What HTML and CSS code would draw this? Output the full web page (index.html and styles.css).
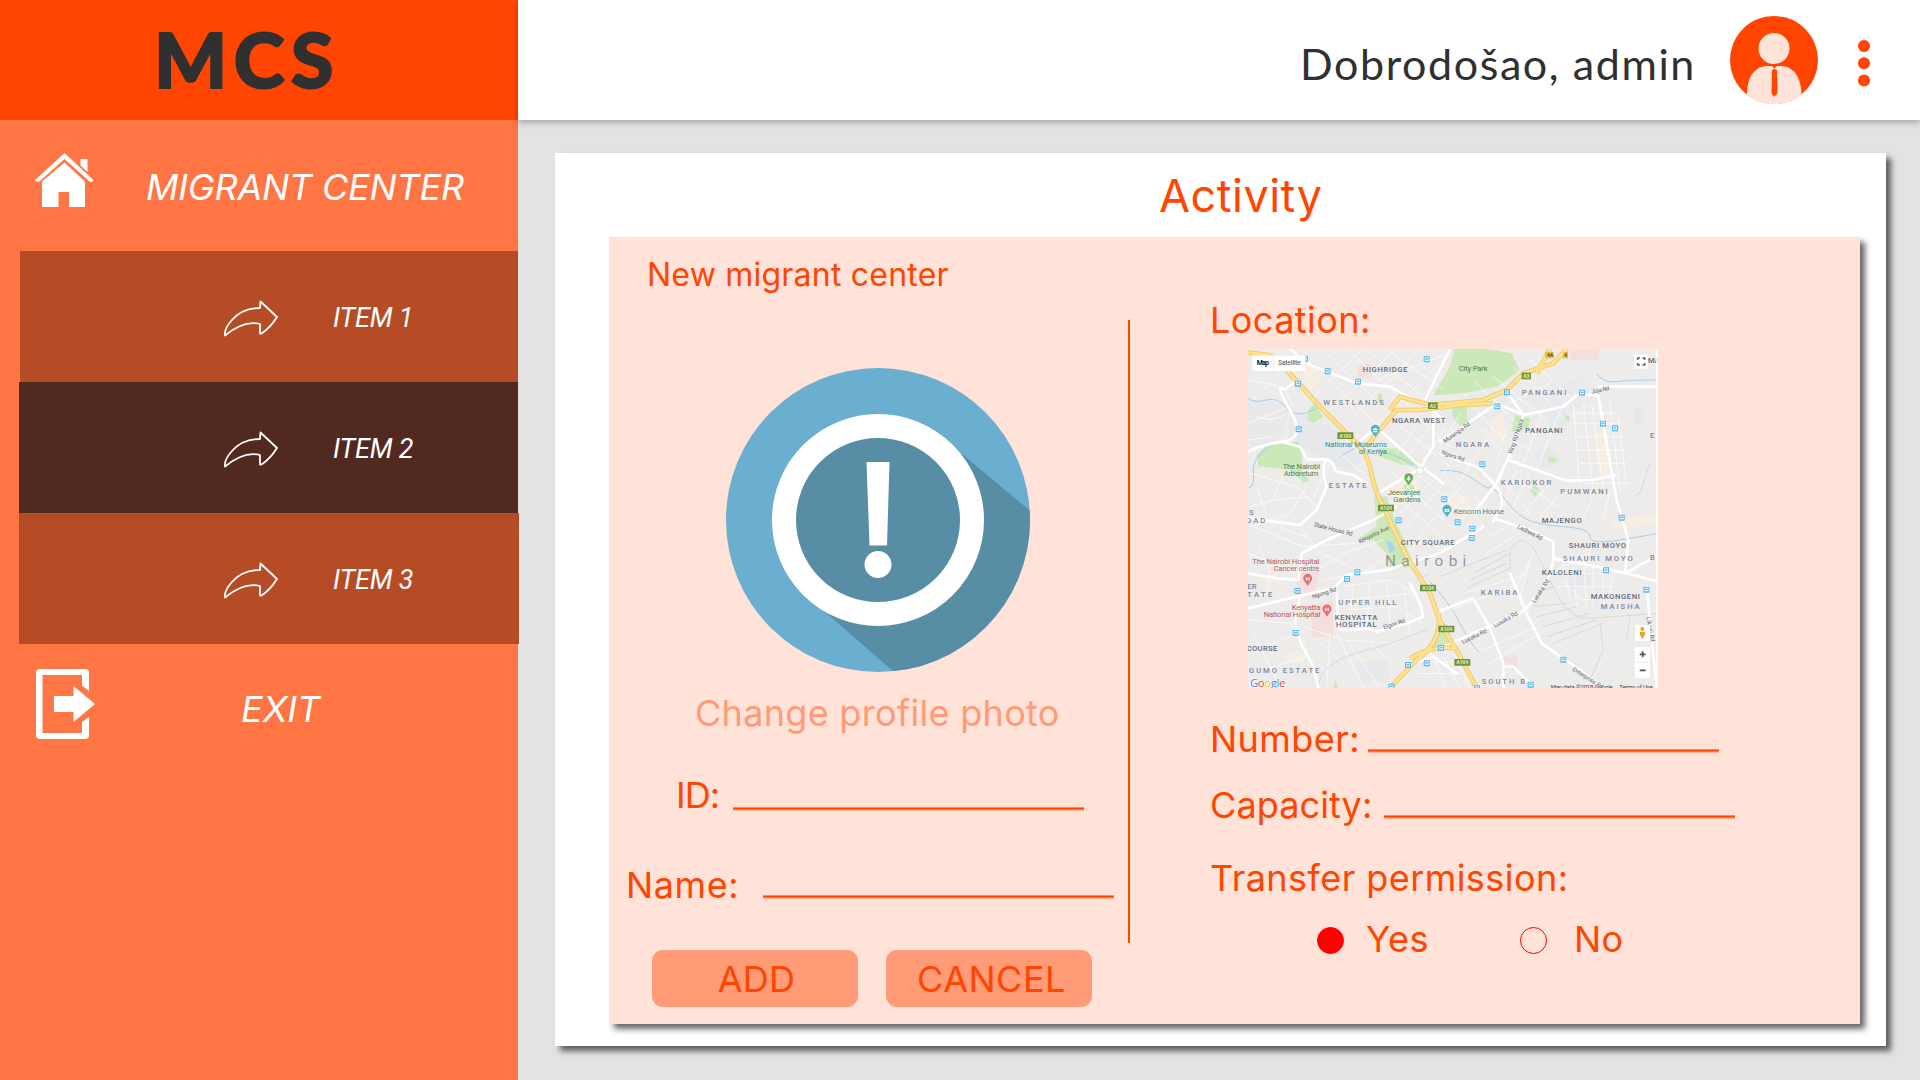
FILE: index.html
```html
<!DOCTYPE html>
<html lang="en">
<head>
<meta charset="utf-8">
<title>MCS</title>
<link rel="stylesheet" href="styles.css">
</head>
<body>
<div class="app">
  <aside class="sidebar">
    <div class="brand"><span class="brand-text">MCS</span></div>
    <a class="nav-home">
      <svg class="home-icon" width="60" height="56" viewBox="0 0 60 56" fill="#fff"><path d="M46.500 6H53.500V19L46.500 12.500Z"/><path d="M30.500 0 60 27.500Q58 29.500 55.500 28.500L30.500 6 5.500 28.500Q2.500 29.500 .5 27.500Z"/><path d="M30.500 9.500 51 28.500V54H35V40Q35 39 34 39H25.500Q24.500 39 24.500 40V54H8V28.500Z"/></svg>
      <span class="t-home">MIGRANT CENTER</span>
    </a>
    <nav class="items">
      <a class="item"><svg class="arrow" width="58" height="40" viewBox="0 0 58 40"><path d="M38.500 2.500 55 18Q48 29 39.500 34.500L38 34.500V25Q22 21 3 36.500 2 30 9.500 21.500 20 9 38 9Z"/></svg><span class="t-item">ITEM 1</span></a>
      <a class="item active"><svg class="arrow" width="58" height="40" viewBox="0 0 58 40"><path d="M38.500 2.500 55 18Q48 29 39.500 34.500L38 34.500V25Q22 21 3 36.500 2 30 9.500 21.500 20 9 38 9Z"/></svg><span class="t-item">ITEM 2</span></a>
      <a class="item last"><svg class="arrow" width="58" height="40" viewBox="0 0 58 40"><path d="M38.500 2.500 55 18Q48 29 39.500 34.500L38 34.500V25Q22 21 3 36.500 2 30 9.500 21.500 20 9 38 9Z"/></svg><span class="t-item">ITEM 3</span></a>
    </nav>
    <a class="nav-exit">
      <svg width="60" height="70" viewBox="0 0 60 70" fill="#fff"><path d="M4 0H49Q53 0 53 4V22L46 16.500V6H6.500V64H46V53L53 48V66Q53 70 49 70H4Q0 70 0 66V4Q0 0 4 0Z"/><path d="M18 27H37.500V17L59 35 37.500 53V43H18Z"/></svg>
      <span class="t-exit">EXIT</span>
    </a>
  </aside>
  <div class="content">
    <header class="topbar">
      <span class="welcome">Dobrodošao, admin</span>
      <svg class="avatar" width="88" height="88" viewBox="0 0 88 88"><circle cx="44" cy="44" r="44" fill="#ff4500"/><g fill="#ffe2d8"><circle cx="44" cy="32.500" r="15.500"/><path d="M17 79C17 60 25 50 38 50H50C63 50 71 60 71.500 78.500A44 44 0 0 1 17 79Z"/></g><path fill="#ff4500" d="M41.500 49.500H47L44.500 52.500ZM42 54 44.300 53 47 54 47.500 77 44 81 41.500 77Z"/></svg>
      <svg class="dots" width="12" height="48" viewBox="0 0 12 48" fill="#ff4500"><circle cx="6" cy="7" r="6"/><circle cx="6" cy="24.200" r="6"/><circle cx="6" cy="41.500" r="6"/></svg>
    </header>
    <main class="panel">
      <h1 class="heading">Activity</h1>
      <section class="card">
        <div class="left">
          <h2 class="subtitle">New migrant center</h2>
          <svg class="photo" width="304" height="304" viewBox="0 0 304 304"><clipPath id="disc"><circle cx="152" cy="152" r="152"/></clipPath><circle cx="152" cy="152" r="152" fill="#6aafcf"/><path clip-path="url(#disc)" fill="#578da5" d="M236 86 320 156V304H183L97 242Z"/><path clip-path="url(#disc)" fill="#578da5" d="M97 242 167 303H230V200Z"/><circle cx="152" cy="152" r="94" fill="#578da5" stroke="#fff" stroke-width="24"/><path fill="#fff" d="M140.500 94H163.500L161 177.500H143.500Z"/><circle cx="152" cy="196.500" r="13.500" fill="#fff"/></svg>
          <a class="change">Change profile photo</a>
          <div class="field f-id"><label class="l-id">ID:</label><span class="line"></span></div>
          <div class="field f-name"><label class="l-name">Name:</label><span class="line"></span></div>
          <div class="buttons"><button class="btn"><span class="t-add">ADD</span></button><button class="btn"><span class="t-cancel">CANCEL</span></button></div>
        </div>
        <div class="divider"></div>
        <div class="right">
          <label class="l-location">Location:</label>
          <svg class="map" width="410" height="339" viewBox="54 27 1230 1017">
            <defs>
              <g id="bus"><rect x="-9" y="-9" width="18" height="18" rx="2" fill="#53b7f2"/><path fill="#e9f7ff" d="M-6-6H6V5H-6Z"/><path fill="#53b7f2" d="M-4-3H4V1H-4Z"/></g>
              <g id="shield"><rect x="-24" y="-10" width="48" height="20" rx="2" fill="#6f943d"/><text x="-18" y="6" class="shield-text" textLength="36">A104</text></g>
              <g id="pin"><path d="M0 20-9 7A13.500 13.500 0 1 1 9 7Z"/></g>
            </defs>
            <rect x="54" y="27" width="1230" height="1017" fill="#edeceb"/>
            <g fill="#e6e8ec"><path d="M180 200 300 260 400 330 370 400 230 330 180 300Z"/><path d="M54 180 180 190 160 290 54 330Z" opacity=".6"/><path d="M630 190 780 150 900 170 1060 110 1090 190 900 250 630 260Z" opacity=".5"/><path d="M960 190H1010V270H960ZM1210 205H1240V255H1210ZM910 330 960 320 1000 370 930 385ZM1010 710 1090 690 1080 740 1020 750ZM380 970 470 960 480 1020 400 1030Z"/></g>
            <g fill="#f6eee2"><path d="M210 90 260 75 275 130 235 150ZM640 980 670 960 700 990ZM780 240 820 215 825 300 785 300ZM1090 280 1130 270 1145 400 1110 410ZM480 440 560 410 570 470 500 500ZM650 460 720 470 710 540 660 520ZM105 705 140 700 145 725 105 730ZM165 945 210 935 225 965 175 970ZM1140 540 1284 520V550L1150 570Z"/></g>
            <g fill="#f3dfde"><path d="M200 700 270 690 250 770 200 765ZM245 795 310 780V890H245ZM1020 30 1110 27 1100 60 1020 60ZM810 950H860V985H815ZM378 80 420 70 425 110 385 125Z"/></g>
            <g fill="#cbe8b8"><path d="M660 80 610 165 630 165 700 160 800 140 868 92 845 40 770 27H672Z"/><path d="M80 345 110 315 205 305 217 350 215 400 240 420 222 430 180 390 85 378Z"/><path d="M235 210 255 190 280 230 250 250 232 238Z"/><path d="M440 325 500 325 560 360 562 382 510 372 445 348Z"/><path d="M432 470H470L495 540 555 680 480 685 470 640 430 600 380 600 440 560Z"/><path d="M668 195H710L712 245 690 258 668 230Z"/><path d="M855 225 900 235 895 262 860 275 845 275Z"/><path d="M520 435 538 425 555 445 525 455ZM1003 225 1020 230 1017 245 1003 240ZM900 450 915 432 930 455 915 470ZM955 350 980 355 975 368 955 365ZM630 830 660 870 660 925H600L622 880ZM605 790H622L615 815ZM315 1020 325 1044 312 1044ZM443 160H456V190H443Z"/></g>
            <g fill="none" stroke="#a4cdef" stroke-width="3"><path d="M54 175Q75 190 110 180T170 205 260 205M54 445Q75 440 70 400T105 330 165 310M440 330Q490 340 550 375M330 350 400 310"/><path d="M630 392Q690 385 735 420T780 440L820 470Q850 515 885 535T1000 560 1080 590 1170 600 1284 580"/><path d="M1100 100Q1120 130 1160 125T1284 120M600 725Q660 790 690 850T745 935"/></g>
            <path fill="#a7d2f2" d="M470 605 485 605 495 630 480 638Z"/>
            <g fill="none" stroke="#fff" stroke-width="2.500" opacity=".85">
              <path d="M230 60 450 260M290 40 500 240M350 27 540 200M410 27 600 190M470 27 640 150M250 170 400 27M300 210 500 27M350 250 570 27M400 290 640 60M440 120 660 40M54 250 180 200M54 120 160 140 190 200M70 180 150 100M80 230Q130 250 170 220M54 300 130 290M60 400 200 440 260 500M80 440 110 520M160 400 130 480 60 500M230 440 180 520 60 560M130 480 240 470M300 370 250 470M330 340 420 420M330 280 430 380"/>
              <path d="M500 250 660 380M540 210 660 320M480 390 660 560M510 360 680 500M470 450 650 600M560 260 500 340M620 230 540 340M650 260 580 360M580 400 480 490M610 420 510 520M650 420 530 560M690 440 560 600M640 400 760 560M660 390 780 520"/>
              <path d="M700 160 790 270 900 330M730 120 900 290M790 110 950 240M850 80 1010 240M900 60 1030 180M740 250 840 360M770 170 900 110M800 210 960 130M690 220 630 320M720 290 640 400M770 300 690 420M830 260 800 370M870 250 840 370M940 210 880 370M1000 190 920 390M1030 190 1050 450M1060 190 1090 450M1085 190 1120 450M1140 190 1170 450M1165 230 1190 450M1030 220H1160M1030 250H1165M1040 290H1180M1045 330H1190M1050 370H1190M1060 430H1200M830 390 980 500M800 400 900 520M860 390 820 500M900 400 850 500M960 430 880 520M1000 450 920 540M1100 440 1060 540M1140 450 1120 540"/>
              <path d="M70 560 220 620 380 610M140 530 160 570 230 590M54 640 200 700M90 620 120 700 110 770M210 560 270 640 360 680M260 690 340 640 460 600M280 720 400 700 480 640M330 740 480 720 560 760M340 780 560 760M350 810 500 800 580 850M370 740 360 860M420 720 410 870M470 720 480 860M520 740 540 880M54 840 180 850 230 920M80 930 180 890M100 990 230 950M70 880 150 1040M220 860 340 900 500 910M260 900 350 980M300 880 290 1040M320 880 400 1044M350 900 450 1044M400 890 500 980"/>
              <path d="M700 760 900 700M660 810 850 740M720 880 880 820M760 930 920 860M780 970 930 880M670 940 720 1044M640 950 690 1044M600 930 650 1044M840 700 900 820M900 660 870 770M590 970 700 960M560 1000H700M910 640 840 780M980 690 1080 640 1140 700M990 720 1060 780 1180 760M1000 660 1020 780M1030 670 1040 800M1060 650 1070 800M1090 660 1090 800M1120 680 1120 790M1150 690 1140 780M980 740H1150M980 700H1130M830 560 760 600M850 590 770 640"/>
            </g>
            <g fill="none" stroke="#d8d9dc" stroke-width="3"><path d="M710 745 850 680M730 700 840 640M720 720 830 670M630 710 830 630M840 690V630Q880 570 920 640L990 780Q1030 840 1080 835L1284 820M920 760 970 740M910 800 1010 790M920 830 1040 800M940 860 1080 820M950 890 1100 840M970 910 1120 850M1110 850 1120 930 1080 1020M1200 830 1190 900M1260 370 1230 460 1210 470M264 1044Q270 970 380 940T590 870M560 720 600 700"/></g>
            <g fill="none" stroke="#fff" stroke-width="8" stroke-linejoin="round" stroke-linecap="round">
              <path d="M54 335Q90 315 160 305T180 210 165 150L200 120M180 27 240 75 380 130 480 140 570 190 610 195M160 307 210 320 230 358 290 358Q310 365 318 395L370 405 410 430M290 360Q270 380 290 440L260 510 210 555 54 535M370 320 440 262 560 370 640 430"/>
              <path d="M660 27 580 190 640 240M610 200V320L570 385 440 462M630 303 700 260 800 190 880 225 1000 200 1040 165H1100L1110 140H1284M830 155 880 225 850 320 800 430 730 520M630 340 750 385 795 435Q820 460 815 500L790 545M835 360 1010 422 1090 420 1155 405M1105 165 1135 340 1160 480 1195 600 1185 700"/>
              <path d="M54 700 140 715 205 720 215 640 290 600 430 540 500 500M54 805 200 770 310 745 350 705 470 690 630 640 760 560M210 770 195 850 210 905 250 980 265 1044M320 750 325 840 330 870 370 870 410 865 440 875 530 850 580 830 570 790 540 730"/>
              <path d="M790 535 900 570 970 605V660L950 730 885 810 800 850 640 920M970 655 1100 680 1190 700 1284 725M1185 700 1284 645M1250 740 1260 850 1280 1044M840 700 885 810 935 910 1050 990 1120 1044M630 812 730 775 780 865 820 970V1044M820 980 850 980 900 1030M550 970 610 950 680 1000"/>
            </g>
            <g fill="none" stroke="#efc766" stroke-width="14" stroke-linejoin="round"><path d="M54 38 120 45 160 80 270 200 380 310Q410 340 420 380 430 450 465 510L530 650 600 760 625 830Q640 870 680 930L740 1044M625 820Q640 900 560 960L480 1044M540 955Q610 915 675 925M410 320 440 280 500 210H570L690 195 790 190M480 210 510 170 600 195 760 180 830 150 880 100 970 70 1010 27M920 100 960 27"/></g>
            <g fill="none" stroke="#ffe28d" stroke-width="9" stroke-linejoin="round"><path d="M54 38 120 45 160 80 270 200 380 310Q410 340 420 380 430 450 465 510L530 650 600 760 625 830Q640 870 680 930L740 1044M625 820Q640 900 560 960L480 1044M540 955Q610 915 675 925M410 320 440 280 500 210H570L690 195 790 190M480 210 510 170 600 195 760 180 830 150 880 100 970 70 1010 27M920 100 960 27"/></g>
            <g fill="#fff" stroke="#cbe8b8" stroke-width="3"><circle cx="571" cy="392" r="11"/></g>
            <use href="#bus" x="225" y="57"/><use href="#bus" x="293" y="94"/><use href="#bus" x="204" y="131"/><use href="#bus" x="384" y="125"/><use href="#bus" x="590" y="58"/><use href="#bus" x="206" y="268"/><use href="#bus" x="643" y="478"/><use href="#bus" x="506" y="541"/><use href="#bus" x="831" y="157"/><use href="#bus" x="802" y="199"/><use href="#bus" x="757" y="373"/><use href="#bus" x="1056" y="158"/><use href="#bus" x="1119" y="251"/><use href="#bus" x="1155" y="265"/><use href="#bus" x="1175" y="533"/><use href="#bus" x="683" y="547"/><use href="#bus" x="727" y="566"/><use href="#bus" x="725" y="594"/><use href="#bus" x="382" y="697"/><use href="#bus" x="351" y="717"/><use href="#bus" x="202" y="753"/><use href="#bus" x="197" y="879"/><use href="#bus" x="534" y="975"/><use href="#bus" x="590" y="970"/><use href="#bus" x="633" y="924"/><use href="#bus" x="484" y="1040"/><use href="#bus" x="741" y="1045"/><use href="#bus" x="902" y="1034"/><use href="#bus" x="1000" y="959"/><use href="#bus" x="1128" y="691"/><use href="#bus" x="1249" y="749"/>
            <use href="#shield" x="346" y="287"/><use href="#shield" x="468" y="504"/><use href="#shield" x="594" y="744"/><use href="#shield" x="649" y="867"/><use href="#shield" x="697" y="967"/>
            <g><rect x="594" y="187" width="29" height="20" fill="#6f943d"/><text class="shield-text" x="599" y="203" textLength="19">A2</text><rect x="875" y="98" width="28" height="20" fill="#6f943d"/><text class="shield-text" x="880" y="114" textLength="19">A3</text><rect x="946" y="36" width="25" height="19" fill="#e8bd4d"/><text class="shield-text dark" x="950" y="51">4A</text><rect x="999" y="36" width="15" height="19" fill="#e8bd4d"/><text class="shield-text dark" x="1002" y="51">4</text></g>
            <use href="#pin" x="436" y="271" fill="#4db3c2"/><path fill="#fff" d="M429 268 436 263 443 268V270H429ZM430 272H442V277H430Z"/><use href="#pin" x="651" y="511" fill="#4db3c2"/><path fill="#fff" d="M644 507H658V516H644Z"/><circle cx="651" cy="511" r="2.500" fill="#4db3c2"/><use href="#pin" x="536" y="416" fill="#66b258"/><path fill="#fff" d="M534 408H538V415H543L536 424 529 415H534Z"/><use href="#pin" x="233" y="718" fill="#e57373"/><use href="#pin" x="291" y="810" fill="#e57373"/><path fill="none" stroke="#fff" stroke-width="2.500" d="M229 711V722M237 711V722M229 716.500H237M287 803V814M295 803V814M287 808.500H295"/>
            <g class="place">
              <text x="398" y="95" class="dk" textLength="135">HIGHRIDGE</text><text x="280" y="194" textLength="182">WESTLANDS</text><text x="486" y="248" class="dk" textLength="160">NGARA WEST</text><text x="296" y="443" textLength="114">ESTATE</text><text x="57" y="525">S</text><text x="48" y="548" textLength="58">OAD</text>
              <text x="875" y="164" textLength="134">PANGANI</text><text x="885" y="279" class="dk" textLength="112">PANGANI</text><text x="677" y="321" textLength="100">NGARA</text><text x="812" y="435" textLength="152">KARIOKOR</text><text x="991" y="461" textLength="142">PUMWANI</text><text x="1254" y="69" class="dk">MA</text><text x="1260" y="293">E</text>
              <text x="512" y="614" class="dk" textLength="162">CITY SQUARE</text><text x="52" y="746">ER</text><text x="52" y="771" textLength="75">TATE</text><text x="325" y="794" textLength="174">UPPER HILL</text><text x="314" y="839" class="dk" textLength="128">KENYATTA</text><text x="318" y="861" class="dk" textLength="122">HOSPITAL</text><text x="50" y="932" class="dk" textLength="92">COURSE</text><text x="57" y="999" textLength="211">GUMO ESTATE</text>
              <text x="935" y="549" class="dk" textLength="120">MAJENGO</text><text x="1016" y="624" class="dk" textLength="172">SHAURI MOYO</text><text x="998" y="663" textLength="210">SHAURI MOYO</text><text x="1260" y="660">B</text><text x="935" y="704" class="dk" textLength="120">KALOLENI</text><text x="752" y="764" textLength="110">KARIBA</text><text x="1082" y="778" class="dk" textLength="148">MAKONGENI</text><text x="1112" y="807" textLength="117">MAISHA</text><text x="755" y="1032" textLength="130">SOUTH B</text>
            </g>
            <text class="city" x="465" y="677" textLength="244">Nairobi</text>
            <g class="poi teal"><text x="285" y="321" textLength="186">National Museums</text><text x="386" y="342" textLength="85">of Kenya</text><text x="671" y="523" textLength="151">Kencom House</text></g>
            <g class="poi green"><text x="158" y="387" textLength="112">The Nairobi</text><text x="161" y="409" textLength="104">Arboretum</text><text x="473" y="465" textLength="99">Jeevanjee</text><text x="490" y="487" textLength="82">Gardens</text><text x="686" y="93" textLength="87">City Park</text></g>
            <g class="poi red"><text x="67" y="672" textLength="201">The Nairobi Hospital</text><text x="131" y="693" textLength="137">Cancer centre</text><text x="185" y="809" textLength="86">Kenyatta</text><text x="101" y="832" textLength="170">National Hospital</text></g>
            <g class="road"><text transform="translate(251 559) rotate(14)" textLength="119">State House Rd</text><text transform="translate(389 611) rotate(-26)" textLength="100">Kenyatta Ave</text><text transform="translate(248 776) rotate(-18)" textLength="76">Ngong Rd</text><text transform="translate(462 868) rotate(-18)" textLength="67">Elgon Rd</text><text transform="translate(645 310) rotate(-36)" textLength="95">Murang'a Rd</text><text transform="translate(633 342) rotate(19)" textLength="72">Ngara Rd</text><text transform="translate(847 342) rotate(-72)" textLength="108">Ring Rd Ngara</text><text transform="translate(1085 161) rotate(-12)" textLength="55">Juja Rd</text><text transform="translate(861 564) rotate(27)" textLength="82">Ladhies Rd</text><text transform="translate(914 790) rotate(-56)" textLength="80">Lusaka Rd</text><text transform="translate(795 863) rotate(-29)" textLength="80">Lusaka Rd</text><text transform="translate(699 912) rotate(-26)" textLength="80">Lusaka Rd</text><text transform="translate(1026 991) rotate(32)" textLength="105">Enterprise Rd</text><text transform="translate(1249 832) rotate(80)" textLength="75">Likoni Rd</text></g>
            <text class="google" x="60" y="1041" textLength="106"><tspan fill="#4285f4">G</tspan><tspan fill="#ea4335">o</tspan><tspan fill="#fbbc05">o</tspan><tspan fill="#4285f4">g</tspan><tspan fill="#34a853">l</tspan><tspan fill="#ea4335">e</tspan></text>
            <g class="legal"><text x="962" y="1048" textLength="186">Map data ©2018 Google</text><text x="1168" y="1048" textLength="100">Terms of Use</text></g>
            <rect x="66" y="46" width="160" height="48" fill="#fff" stroke="#ddd"/><path stroke="#e2e2e2" stroke-width="2" d="M131 46V94"/><text class="ctl b" x="80" y="76" textLength="37">Map</text><text class="ctl" x="144" y="76" textLength="68">Satellite</text>
            <rect x="1212" y="44" width="42" height="42" fill="#fff"/><path fill="none" stroke="#666" stroke-width="5" d="M1223 60V54H1230M1237 54H1244V60M1244 69V75H1237M1230 75H1223V69"/>
            <rect x="1215" y="855" width="45" height="48" fill="#fff"/><g fill="#e9a52a"><circle cx="1237" cy="867" r="6"/><path d="M1229 875H1246L1244 888H1241V895H1234V888H1231Z"/></g>
            <rect x="1215" y="921" width="45" height="93" fill="#fff"/><path stroke="#ddd" stroke-width="2" d="M1220 967H1255"/><path stroke="#555" stroke-width="5" d="M1229 943H1247M1238 934V952M1229 991H1247"/>
            <path fill="#fff" opacity=".8" d="M1278 27H1284V1044H1278Z"/>
          </svg>
          <div class="field f-number"><label class="l-number">Number:</label><span class="line"></span></div>
          <div class="field f-capacity"><label class="l-capacity">Capacity:</label><span class="line"></span></div>
          <div class="l-transfer">Transfer permission:</div>
          <div class="choices"><span class="radio on"></span><label class="l-yes">Yes</label><span class="radio"></span><label class="l-no">No</label></div>
        </div>
      </section>
    </main>
  </div>
</div>
</body>
</html>
```
FILE: styles.css
```css
* { box-sizing: border-box; }
body { margin: 0; font-family: Inter, Roboto, sans-serif; font-size: 36px; line-height: 45px; color: #ff4500; }
h1, h2 { margin: 0; font-weight: 400; }
span, label, a { white-space: nowrap; }
.app { display: flex; width: 1920px; height: 1080px; overflow: hidden; background: #e3e3e3; }

.sidebar { width: 518px; flex: none; background: #ff7543; color: #fff; font-style: italic; }
.brand { height: 120px; background: #ff4500; color: #303030; padding: 13px 0 0 154px; }
.brand-text { display: block; font: 900 77px/90px Lato, sans-serif; letter-spacing: 6.5px; -webkit-text-stroke: 2px #303030; }
.nav-home { display: flex; height: 131px; padding: 33px 0 0 34px; }
.t-home { margin: 12px 0 0 52px; letter-spacing: -.2px; }
.item { display: flex; width: 498px; height: 131px; margin-left: 20px; padding: 48px 0 0 202px; background: #b54c25; font-family: Roboto, sans-serif; font-size: 27px; }
.item.active { width: 499px; margin-left: 19px; padding-left: 203px; background: #52291f; }
.item.last { position: relative; width: 500px; margin-left: 19px; padding-left: 203px; }
.arrow { fill: none; stroke: #fff; stroke-width: 1.8; stroke-linejoin: round; }
.t-item { margin: -3px 0 0 53px; letter-spacing: -.2px; }
.nav-exit { display: flex; padding: 25px 0 0 36px; }
.t-exit { margin: 18px 0 0 145px; }

.content { flex: 1; min-width: 0; }
.topbar { display: flex; height: 120px; background: #fff; box-shadow: 0 3px 6px rgba(0, 0, 0, .25); }
.welcome { width: 424px; margin: 34px 0 0 782px; color: #303030; font: 400 43px/60px Lato, sans-serif; letter-spacing: 1.6px; }
.avatar { flex: none; margin: 16px 0 0 6px; }
.dots { flex: none; margin: 39px 0 0 40px; }

.panel { width: 1331px; height: 893px; margin: 33px 0 0 37px; padding: 15px 0 0 54px; background: #fff; box-shadow: 5px 5px 6px rgba(0, 0, 0, .6); }
.heading { height: 69px; padding: 0 0 0 550px; font-size: 45px; line-height: 55px; letter-spacing: .5px; }
.card { display: flex; width: 1251px; height: 787px; background: #ffe2d8; box-shadow: 5px 5px 6px rgba(0, 0, 0, .6); }
.left { width: 519px; padding-top: 17px; letter-spacing: .3px; }
.subtitle { margin-left: 38px; font-size: 32px; line-height: 41px; letter-spacing: .22px; }
.photo { display: block; margin: 73px 0 0 117px; }
.change { display: block; height: 44px; margin: 19px 0 0 86px; color: #ff9b76; }
.field { display: flex; height: 44px; }
.line { width: 351px; height: 4px; margin-top: 34px; background: linear-gradient(#ff8a5e 1px, #ff4500 1px 2px, #ff7946 2px 3px, #ffb598 3px); }
.f-id { margin: 38px 0 0 67px; }
.l-id { width: 57px; letter-spacing: -1px; }
.f-name { margin: 46px 0 0 17px; }
.f-name .line { margin-top: 32px; }
.l-name { width: 137px; letter-spacing: .6px; }
.buttons { display: flex; gap: 28px; margin: 43px 0 0 43px; }
.btn { width: 206px; height: 57px; padding: 1px 0 0 3px; border: 0; border-radius: 11px; background: #ff9b76; color: #ff4500; font: inherit; letter-spacing: .3px; }
.t-cancel { padding-left: 2px; letter-spacing: .5px; }
.divider { width: 2px; height: 623px; margin-top: 83px; background: #ff4500; }
.right { padding: 61px 0 0 80px; letter-spacing: .45px; }
.l-location { display: block; height: 44px; }
.map { display: block; margin: 7px 0 29px 38px; font-family: Roboto, sans-serif; letter-spacing: 0; }
.f-number .line { margin-top: 32px; }
.l-number { width: 158px; }
.f-capacity { margin-top: 22px; }
.f-capacity .line { margin-top: 32px; }
.l-capacity { width: 174px; letter-spacing: .1px; }
.l-transfer { height: 44px; margin: 29px 0 0; }
.choices { display: flex; margin: 17px 0 0 107px; }
.radio { flex: none; width: 27px; height: 27px; margin-top: 10px; border: 1.5px solid #f00; border-radius: 50%; }
.radio.on { background: #f00; }
.l-yes { width: 176px; padding-left: 22px; }
.l-no { padding-left: 27px; }

.place { font-size: 23px; font-weight: 500; fill: #7d879d; }
.place .dk { fill: #626a7b; }
.city { font-size: 46px; fill: #92969e; }
.poi { font-size: 23px; }
.teal { fill: #4a8799; }
.green { fill: #50804d; }
.red { fill: #b55d62; }
.road { font-size: 18px; fill: #62666e; }
.shield-text { font-size: 16px; font-weight: 700; fill: #e8eda0; }
.shield-text.dark { fill: #665020; }
.google { font: 500 34px "Open Sans", sans-serif; stroke: #fff; stroke-width: 3px; paint-order: stroke; }
.legal { font-size: 18px; fill: #444; }
.ctl { font-size: 21px; fill: #555; }
.ctl.b { font-weight: 700; fill: #111; }
```
